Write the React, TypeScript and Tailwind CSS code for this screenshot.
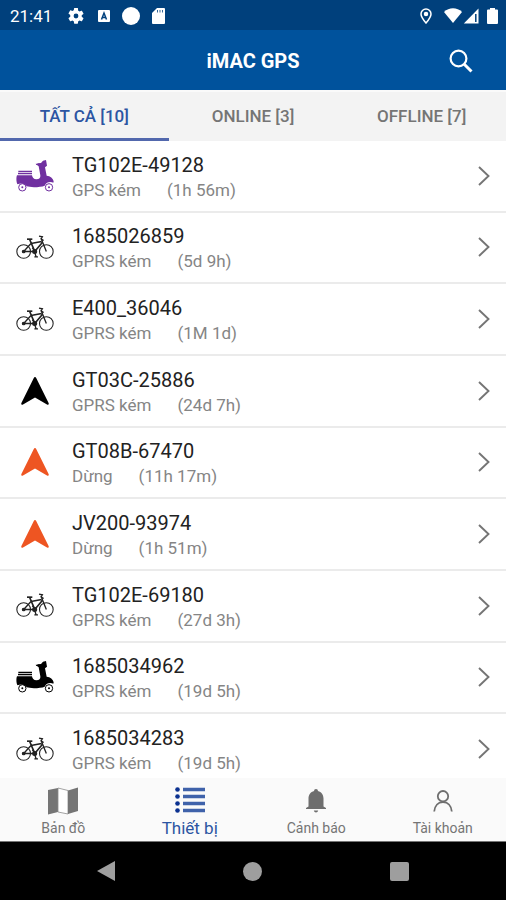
import clsx from 'clsx';

type Vehicle = 'scooter' | 'bicycle' | 'arrow';

interface Device {
    name: string;
    status: string;
    elapsed: string;
    vehicle: Vehicle;
    color: string;
}

const devices: Device[] = [
    { name: 'TG102E-49128', status: 'GPS kém', elapsed: '(1h 56m)', vehicle: 'scooter', color: 'text-[#7030a0]' },
    { name: '1685026859', status: 'GPRS kém', elapsed: '(5d 9h)', vehicle: 'bicycle', color: 'text-[#222222]' },
    { name: 'E400_36046', status: 'GPRS kém', elapsed: '(1M 1d)', vehicle: 'bicycle', color: 'text-[#222222]' },
    { name: 'GT03C-25886', status: 'GPRS kém', elapsed: '(24d 7h)', vehicle: 'arrow', color: 'text-black' },
    { name: 'GT08B-67470', status: 'Dừng', elapsed: '(11h 17m)', vehicle: 'arrow', color: 'text-[#ee5522]' },
    { name: 'JV200-93974', status: 'Dừng', elapsed: '(1h 51m)', vehicle: 'arrow', color: 'text-[#ee5522]' },
    { name: 'TG102E-69180', status: 'GPRS kém', elapsed: '(27d 3h)', vehicle: 'bicycle', color: 'text-[#222222]' },
    { name: '1685034962', status: 'GPRS kém', elapsed: '(19d 5h)', vehicle: 'scooter', color: 'text-black' },
    { name: '1685034283', status: 'GPRS kém', elapsed: '(19d 5h)', vehicle: 'bicycle', color: 'text-[#222222]' },
];

const tabs = ['TẤT CẢ [10]', 'ONLINE [3]', 'OFFLINE [7]'];

function ScooterIcon() {
    return (
        <svg viewBox="12 19 114 96" className="w-[38px] h-8" fill="currentColor">
            <path d="M19 51h41v4H19zM18 57h42v5H18z" />
            <path d="M15 65h45c1 7 5 12 13 12 9 0 13-4 12-12l-5-27-6-5 3-4 10-1 6-7 9-2 3 17-6 5 5 25c11 1 19 7 21 17l-1 4c-8-3-21-3-26 9-12 5-42 6-54 2-3-8-18-11-27-6-4-3-5-20-2-27z" />
            <path d="M71 30h12v4H73z" />
            <g fill="none" stroke="currentColor" strokeWidth="3">
                <circle cx="31" cy="101" r="11" />
                <circle cx="111" cy="101" r="11" />
            </g>
            <circle cx="31" cy="101" r="3" />
            <circle cx="111" cy="101" r="3" />
        </svg>
    );
}

function BicycleIcon() {
    return (
        <svg viewBox="11 24 114 74" className="w-[38px] h-[25px]" fill="none" stroke="currentColor" strokeWidth="3.2">
            <circle cx="34" cy="73" r="20.500" />
            <circle cx="102" cy="73" r="20.500" />
            <path d="M34 73l22-24M34 73h33" strokeWidth="4" />
            <path d="M67 72L52 37M56 49l32-6M69 71l21-25" strokeWidth="5" />
            <path d="M102 73L86 33M80 27l10 2-4 6 8 5" strokeWidth="4" />
            <path d="M44 36h16" strokeWidth="5" />
            <path d="M66 72l5 16M66 89h11M60 62l8 10" strokeWidth="4" />
            <circle cx="67" cy="73" r="6" fill="currentColor" />
            <circle cx="34" cy="73" r="4" fill="currentColor" />
        </svg>
    );
}

function ArrowIcon() {
    return (
        <svg viewBox="0 0 28 28" className="size-7" fill="currentColor">
            <path d="M14 0c.5 0 .9.4 1.200 1l12.400 25c.5 1.200-.4 2.100-1.600 1.500L14 20.500 2 27.500C.8 28.100-.1 27.200.4 26L12.800 1c.3-.6.7-1 1.200-1z" />
        </svg>
    );
}

const vehicleIcons = { scooter: ScooterIcon, bicycle: BicycleIcon, arrow: ArrowIcon };

function SearchIcon() {
    return (
        <svg viewBox="0 0 24 24" className="size-6" fill="none" stroke="currentColor">
            <circle cx="9.500" cy="9.500" r="7.900" strokeWidth="2.200" />
            <path d="M15 15l7.500 7.500" strokeWidth="3" />
        </svg>
    );
}

function ChevronIcon() {
    return (
        <svg viewBox="0 0 12 20" className="w-3 h-5" fill="none" stroke="#757575" strokeWidth="1.900">
            <path d="M1 1l9.500 9L1 19" />
        </svg>
    );
}

function MapIcon() {
    return (
        <svg viewBox="0 0 30 28" className="w-[30px] h-7">
            <path d="M0 3L10 1v24L0 27.500z" fill="#757575" />
            <path d="M10 1l10 2.500V27l-10-2z" fill="#ffffff" stroke="#8c8c8c" strokeWidth=".8" />
            <path d="M20 3.500L30 .5V24l-10 3z" fill="#757575" />
        </svg>
    );
}

function ListIcon() {
    return (
        <svg viewBox="0 0 30 28" className="w-[30px] h-7">
            {[2.500, 9.500, 16.500, 23.500].map(y => (
                <g key={y}>
                    <circle cx="2.500" cy={y} r="2.300" fill="#0b3190" />
                    <path d={`M8 ${y}h22`} stroke="#3f62aa" strokeWidth="3.500" />
                </g>
            ))}
        </svg>
    );
}

function BellIcon() {
    return (
        <svg viewBox="0 0 20 24" className="w-5 h-6" fill="#6e6e6e">
            <path d="M10 0c1.200 0 1.900.7 1.900 1.900 3.600.9 5.600 3.700 5.600 7.600V17.500l2.500 1.500v1H0v-1l2.500-1.500V9.500c0-3.900 2-6.700 5.600-7.600C8.100.7 8.800 0 10 0zM7.800 21.500h4.400c-.3 1.300-1.100 2-2.200 2s-1.900-.7-2.200-2z" />
        </svg>
    );
}

function PersonIcon() {
    return (
        <svg viewBox="0 0 20 22" className="w-5 h-[22px]" fill="none" stroke="#6e6e6e" strokeWidth="1.800">
            <circle cx="10" cy="6.200" r="5.200" />
            <path d="M1.200 21.500C1.700 15.500 5.300 12 10 12s8.300 3.500 8.800 9.500" />
        </svg>
    );
}

const navItems = [
    { label: 'Bản đồ', icon: MapIcon },
    { label: 'Thiết bị', icon: ListIcon, active: true },
    { label: 'Cảnh báo', icon: BellIcon },
    { label: 'Tài khoản', icon: PersonIcon },
];

function StatusBar() {
    return (
        <div className="flex h-[30px] shrink-0 items-center justify-between bg-[#00407c] pl-[10px] pr-2 pt-px text-white">
            <div className="flex items-center">
                <span className="w-[58px] text-[17px] leading-5">21:41</span>
                <svg viewBox="2 2 20 20" className="mr-[14px] size-4" fill="currentColor">
                    <path d="M19.140 12.940c.040-.3.060-.61.060-.94s-.02-.64-.07-.94l2.030-1.580a.5.5 0 0 0 .12-.61l-1.920-3.320a.5.5 0 0 0-.59-.22l-2.390.96a7 7 0 0 0-1.620-.94l-.36-2.540A.5.5 0 0 0 13.920 2h-3.840a.5.5 0 0 0-.48.41l-.36 2.540a7 7 0 0 0-1.620.94l-2.390-.96a.5.5 0 0 0-.59.22L2.720 8.470a.5.5 0 0 0 .12.61l2.030 1.580a6 6 0 0 0 0 2.280l-2.030 1.580a.5.5 0 0 0-.12.61l1.920 3.320c.12.22.37.29.59.22l2.390-.96c.5.38 1.030.7 1.620.94l.36 2.540c.05.24.24.41.48.41h3.840c.24 0 .44-.17.470-.41l.36-2.540a7 7 0 0 0 1.620-.94l2.390.96c.22.08.47 0 .59-.22l1.920-3.320a.5.5 0 0 0-.12-.61zM12 15a3 3 0 1 1 0-6 3 3 0 0 1 0 6z" />
                </svg>
                <svg viewBox="0 0 12 12" className="mr-3 size-3">
                    <rect width="12" height="12" rx="1" fill="#ffffff" />
                    <path d="M3.500 9.500L6 3l2.500 6.500M4.500 7.500h3" fill="none" stroke="#00407c" strokeWidth="1.500" />
                </svg>
                <span className="mr-3 size-[18px] rounded-full bg-white" />
                <svg viewBox="0 0 13 16" className="w-[13px] h-4">
                    <path d="M5 0h7a1 1 0 0 1 1 1v14a1 1 0 0 1-1 1H1a1 1 0 0 1-1-1V5z" fill="#ffffff" />
                    <path d="M5.500 2v2.500M8 2v2.500M10.500 2v2.500" stroke="#00407c" strokeWidth=".8" />
                </svg>
            </div>
            <div className="flex items-center">
                <svg viewBox="0 0 12 16" className="mr-3 w-3 h-4" fill="none" stroke="currentColor" strokeWidth="1.500">
                    <path d="M6 15C3 11.500 1 8.500 1 6a5 5 0 0 1 10 0c0 2.500-2 5.500-5 9z" />
                    <circle cx="6" cy="6" r="1.500" fill="currentColor" />
                </svg>
                <svg viewBox="0 0 18 15" className="w-[18px] h-[15px]" fill="currentColor">
                    <path d="M9 15L0 4c5-5 13-5 18 0z" />
                </svg>
                <svg viewBox="0 0 16 16" className="mr-2 ml-px size-4">
                    <path d="M15.500.5v15H.8z" fill="#ffffff" />
                    <path d="M12.800 6v8" stroke="#00407c" strokeWidth="1.500" />
                </svg>
                <svg viewBox="0 0 11 16" className="w-[11px] h-4" fill="currentColor">
                    <path d="M3 0h5v1.500h2a1 1 0 0 1 1 1V15a1 1 0 0 1-1 1H1a1 1 0 0 1-1-1V2.500a1 1 0 0 1 1-1h2z" />
                </svg>
            </div>
        </div>
    );
}

function DeviceRow({ device }: { device: Device }) {
    const Icon = vehicleIcons[device.vehicle];

    return (
        <li className="flex border-b-2 border-[#ebebeb]">
            <button type="button" className="flex flex-1 items-center pr-4 text-left">
                <span className={clsx('flex w-[70px] shrink-0 justify-center', device.color)}>
                    <Icon />
                </span>
                <span className="flex-1 pl-[2px] pt-[2px]">
                    <span className="block text-xl leading-[26px] text-[#222222]">{device.name}</span>
                    <span className="flex gap-[26px] text-[17px] leading-6 text-[#858585]">
                        <span>{device.status}</span>
                        <span>{device.elapsed}</span>
                    </span>
                </span>
                <ChevronIcon />
            </button>
        </li>
    );
}

export default function App() {
    return (
        <div className="flex h-dvh flex-col bg-white font-[Roboto,sans-serif]">
            <StatusBar />

            <header className="grid h-[62px] shrink-0 grid-cols-[1fr_auto_1fr] items-center border-b-2 border-[#fafafa] bg-[#00529c] px-[33px] pt-[2px] text-white">
                <h1 className="col-start-2 text-xl font-bold">iMAC GPS</h1>
                <button type="button" aria-label="Tìm kiếm" className="justify-self-end">
                    <SearchIcon />
                </button>
            </header>

            <div className="grid h-[49px] shrink-0 grid-cols-3 bg-[#f3f3f3]">
                {tabs.map((tab, i) => (
                    <button
                        key={tab}
                        type="button"
                        className={clsx(
                            'border-b-3 pt-1 text-[17px] font-medium',
                            i === 0 ? 'border-[#5268ad] text-[#2c55a2]' : 'border-transparent text-[#757575]'
                        )}
                    >
                        {tab}
                    </button>
                ))}
            </div>

            <main className="flex min-h-0 flex-1 flex-col overflow-hidden">
                <ul className="-mb-2 grid flex-1 auto-rows-fr">
                    {devices.map(device => (
                        <DeviceRow key={device.name} device={device} />
                    ))}
                </ul>
            </main>

            <nav className="grid h-16 shrink-0 grid-cols-4 border-b border-[#757575] bg-[#fafafa]">
                {navItems.map(({ label, icon: Icon, active }) => (
                    <a key={label} href="#" className="flex flex-col items-center pt-[7px]">
                        <span className="flex h-8 items-center">
                            <Icon />
                        </span>
                        <span className={clsx('leading-[22px]', active ? 'text-[17px] text-[#2c55a2]' : 'text-sm text-[#757575]')}>
                            {label}
                        </span>
                    </a>
                ))}
            </nav>

            <div className="flex h-[58px] shrink-0 items-center justify-between bg-black px-[97px]">
                <button type="button" aria-label="Back">
                    <svg viewBox="0 0 18 20" className="w-[18px] h-5" fill="#9e9e9e">
                        <path d="M18 0v20L0 10z" />
                    </svg>
                </button>
                <button type="button" aria-label="Home" className="size-[19px] rounded-full bg-[#9e9e9e]" />
                <button type="button" aria-label="Recents" className="size-[19px] rounded-xs bg-[#9e9e9e]" />
            </div>
        </div>
    );
}
